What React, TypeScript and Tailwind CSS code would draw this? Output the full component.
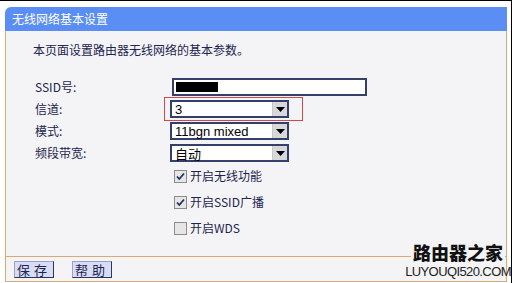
const cjk = { fontFamily: '"Noto Sans CJK SC", "Liberation Sans", sans-serif' };
const latin = { fontFamily: '"Liberation Sans", "Noto Sans CJK SC", sans-serif' };

function SelectBox({ value, font }: { value: string; font?: React.CSSProperties }) {
  return (
    <div className="flex h-[18px] w-[119px] border-2 border-[#34406a] bg-white">
      <div className="flex flex-1 items-center pl-[3px] text-[13px] leading-none text-black" style={font ?? latin}>
        {value}
      </div>
      <div className="flex w-[15px] items-center justify-center border-l border-[#c8c8c8] bg-[#d8d8d8]">
        <svg width="9" height="5" viewBox="0 0 9 5">
          <path d="M0 0h9L4.5 5z" fill="#000" />
        </svg>
      </div>
    </div>
  );
}

function Check({ checked, label }: { checked: boolean; label: React.ReactNode }) {
  return (
    <div className="flex h-[26px] items-center">
      <div className="flex h-[13px] w-[13px] items-center justify-center border border-[#8c8c8c] bg-[#e6e6e6]">
        {checked && (
          <svg width="9" height="9" viewBox="0 0 9 9">
            <path d="M1 4.5l2.3 2.5L8 1.5" stroke="#1f3160" strokeWidth="1.8" fill="none" />
          </svg>
        )}
      </div>
      <span className="ml-[3px] text-[12px] leading-none text-[#1c2450]" style={cjk}>
        {label}
      </span>
    </div>
  );
}

export default function App() {
  return (
    <div className="h-[283px] w-[512px] overflow-hidden border-t border-r border-black bg-white" style={cjk}>
      <div className="relative ml-[5px] mt-[6px] w-[502px]">
        {/* Header */}
        <div className="flex h-[24px] items-center rounded-tl-[6px] bg-[#5a8ef4] pl-[7px] text-[12px] text-white">
          无线网络基本设置
        </div>

        {/* Body */}
        <div className="relative h-[225px] border-x border-[#dcaa70] bg-[#f4f4f6] text-[#1c2450]">
          <div className="pl-[27px] pt-[11px] text-[12px] leading-[16px]">本页面设置路由器无线网络的基本参数。</div>

          <div className="mt-[20px] flex flex-col gap-[4px]">
            <div className="flex h-[18px] items-center">
              <span className="w-[164px] shrink-0 pl-[29px] text-[12px]">SSID号:</span>
              <div className="ml-[2px] flex h-[18px] w-[195px] items-center border-2 border-[#34406a] bg-white pl-[2px]">
                <div className="h-[10px] w-[42px] bg-black" />
              </div>
            </div>
            <div className="relative flex h-[18px] items-center">
              <span className="w-[164px] shrink-0 pl-[29px] text-[12px]">信道:</span>
              <SelectBox value="3" />
              <div className="absolute left-[158px] top-[-3px] h-[24px] w-[139px] border border-[#d24848]" />
            </div>
            <div className="flex h-[18px] items-center">
              <span className="w-[164px] shrink-0 pl-[29px] text-[12px]">模式:</span>
              <SelectBox value="11bgn mixed" />
            </div>
            <div className="flex h-[18px] items-center">
              <span className="w-[164px] shrink-0 pl-[29px] text-[12px]">频段带宽:</span>
              <SelectBox value="自动" font={cjk} />
            </div>
          </div>

          <div className="ml-[168px] mt-[1px] flex flex-col">
            <Check checked label="开启无线功能" />
            <Check checked label="开启SSID广播" />
            <Check checked={false} label="开启WDS" />
          </div>
        </div>

        {/* Footer */}
        <div className="flex h-[26px] items-center gap-[18px] border-x border-y border-[#dcaa70] bg-[#f4f4f6] pl-[8px]">
          <button className="h-[17px] w-[40px] border border-t-[#9aa0c8] border-l-[#9aa0c8] border-r-[#2c3560] border-b-[#2c3560] bg-[#d8dcf4] text-[13px] leading-none tracking-[4px] text-[#1c2450]">
            保存
          </button>
          <button className="h-[17px] w-[40px] border border-t-[#9aa0c8] border-l-[#9aa0c8] border-r-[#2c3560] border-b-[#2c3560] bg-[#d8dcf4] text-[13px] leading-none tracking-[4px] text-[#1c2450]">
            帮助
          </button>
        </div>

        {/* watermark */}
        <div className="absolute left-[404px] top-[235px] flex w-[98px] flex-col items-center">
          <span className="bg-[#f4f4f6] px-[2px] text-[18px] font-black leading-[20px] text-[#111]">路由器之家</span>
          <span className="mt-[3px] text-[13px] leading-[13px] tracking-[-0.6px] text-[#222]" style={latin}>
            LUYOUQI520.COM
          </span>
        </div>
      </div>
    </div>
  );
}
